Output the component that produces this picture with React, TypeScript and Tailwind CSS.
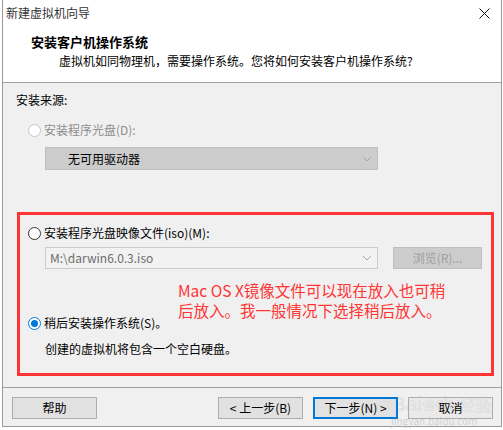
import React from "react";

const font = { fontFamily: '"Noto Sans CJK SC", "Noto Sans", sans-serif' };

const Radio = ({ state }: { state: "off" | "on" | "disabled" }) => {
  if (state === "on") {
    return (
      <span className="flex h-[13px] w-[13px] shrink-0 items-center justify-center rounded-full border border-[#0078d7] bg-white">
        <span className="h-[7px] w-[7px] rounded-full bg-[#0078d7]" />
      </span>
    );
  }
  return (
    <span
      className={`h-[13px] w-[13px] shrink-0 rounded-full border bg-white ${
        state === "disabled" ? "border-[#c4c4c4]" : "border-[#333333]"
      }`}
    />
  );
};

const Chevron = () => (
  <svg width="10" height="6" viewBox="0 0 10 6" className="shrink-0">
    <path d="M1 1l4 4 4-4" fill="none" stroke="#a8a8a8" strokeWidth="1" />
  </svg>
);

const Button = ({ label, primary }: { label: string; primary?: boolean }) => (
  <div
    className={`flex h-[22px] w-[85px] items-center justify-center bg-[#e1e1e1] text-[12px] text-black ${
      primary ? "border-2 border-[#0078d7]" : "border border-[#adadad]"
    }`}
  >
    {label}
  </div>
);

export default function App() {
  return (
    <div className="h-[430px] w-[503px] overflow-hidden bg-white pl-[2px]" style={font}>
      <div className="relative flex h-[427px] w-[500px] flex-col border-x border-b border-[#9a9a9a] bg-[#f0f0f0]">
        {/* title bar */}
        <div className="flex h-[26px] items-center justify-between bg-white pl-[3px] pr-[11px]">
          <span className="text-[12px] leading-4 text-[#333]">新建虚拟机向导</span>
          <svg width="11" height="11" viewBox="0 0 11 11">
            <path d="M0.5 0.5l10 10M10.5 0.5l-10 10" stroke="#111" strokeWidth="1" />
          </svg>
        </div>

        {/* header */}
        <div className="flex h-[56px] flex-col bg-white pt-[7px]">
          <div className="pl-[28px] text-[13px] font-bold leading-[18px] text-black">安装客户机操作系统</div>
          <div className="mt-[2px] pl-[56px] text-[12px] leading-4 text-black">
            虚拟机如同物理机，需要操作系统。您将如何安装客户机操作系统?
          </div>
        </div>
        <div className="h-px bg-[#a0a0a0]" />

        {/* body */}
        <div className="relative flex h-[304px] flex-col pl-[13px] pt-[9px]">
          <div className="text-[12px] leading-4 text-black">安装来源:</div>

          <div className="mt-[14px] flex items-center gap-[3px] pl-[12px]">
            <Radio state="disabled" />
            <span className="text-[12px] leading-4 text-[#8d8d8d]">安装程序光盘(D):</span>
          </div>

          <div className="ml-[29px] mt-[9px] flex h-[23px] w-[333px] items-center justify-between border border-[#bfbfbf] bg-[#cccccc] pl-[22px] pr-[5px]">
            <span className="text-[12px] text-black">无可用驱动器</span>
            <Chevron />
          </div>

          {/* highlighted region */}
          <div className="ml-[1px] mt-[42px] flex h-[164px] w-[477px] flex-col border-[3px] border-[#ff3434] pt-[10px]">
            <div className="flex items-center gap-[3px] pl-[8px]">
              <Radio state="off" />
              <span className="text-[12px] leading-4 text-black">安装程序光盘映像文件(iso)(M):</span>
            </div>

            <div className="mt-[6px] flex gap-[15px] pl-[25px]">
              <div className="flex h-[22px] w-[333px] items-center justify-between border border-[#cccccc] bg-[#f2f2f2] pl-[4px] pr-[5px]">
                <span className="text-[12px] text-[#6d6d6d]">M:\darwin6.0.3.iso</span>
                <Chevron />
              </div>
              <div className="flex h-[22px] w-[89px] items-center justify-center border border-[#bfbfbf] bg-[#cccccc] text-[12px] text-[#a0a0a0]">
                浏览(R)...
              </div>
            </div>

            <div className="mt-[46px] flex items-center gap-[3px] pl-[8px]">
              <Radio state="on" />
              <span className="text-[12px] leading-4 text-black">稍后安装操作系统(S)。</span>
            </div>

            <div className="mt-[10px] pl-[25px] text-[12px] leading-4 text-black">创建的虚拟机将包含一个空白硬盘。</div>
          </div>

          {/* annotation */}
          <div className="absolute left-[175px] top-[197px] w-[290px] text-[15.5px] leading-[20px] text-[#ff3434]">
            Mac OS X镜像文件可以现在放入也可稍
            <br />
            后放入。我一般情况下选择稍后放入。
          </div>
        </div>
        <div className="h-px bg-[#a0a0a0]" />

        {/* watermark sits under the buttons */}
        <div className="pointer-events-none absolute left-[388px] top-[393px] flex flex-col items-start leading-none text-[#e2e2e2]">
          <span className="text-[21px] font-bold tracking-tight" style={{ fontFamily: '"Liberation Sans", sans-serif' }}>
            Bai<span className="text-[17px]">❀</span>du<span className="text-[16px]">经验</span>
          </span>
          <span className="mt-[2px] text-[10px] text-[#d0d0d0]">jingyan.baidu.com</span>
        </div>

        {/* footer */}
        <div className="relative flex flex-1 items-start justify-between pl-[9px] pr-[8px] pt-[9px]">
          <Button label="帮助" />
          <div className="flex gap-[10px]">
            <Button label="< 上一步(B)" />
            <Button label="下一步(N) >" primary />
            <div className="flex h-[22px] w-[85px] items-center justify-center border border-[#adadad] bg-[#e1e1e1]/40 text-[12px] text-black">
              取消
            </div>
          </div>
        </div>
      </div>
    </div>
  );
}
